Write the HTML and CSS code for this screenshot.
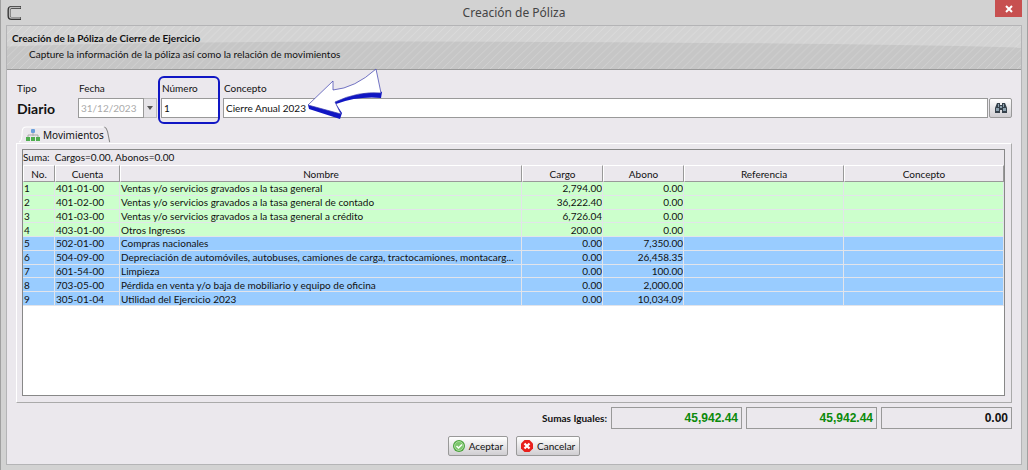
FILE: index.html
```html
<!DOCTYPE html>
<html lang="es">
<head>
<meta charset="utf-8">
<title>Creación de Póliza</title>
<link rel="stylesheet" href="styles.css">
</head>
<body>
<div class="window">
  <header class="titlebar">
    <svg class="app-icon" viewBox="0 0 16 16" aria-hidden="true"><path d="M15 2.500H5.500Q3 2.500 3 5V11Q3 13.500 5.500 13.500H15" fill="none" stroke="#333" stroke-width="3"/><path d="M14.500 2.500H5.500Q3.500 2.500 3.500 5V11Q3.500 13 5.500 13H14.500" fill="none" stroke="#bbb" stroke-width="1.300"/></svg>
    <h1 class="title">Creación de Póliza</h1>
    <button class="close" aria-label="Cerrar"><svg viewBox="0 0 8 8" aria-hidden="true"><path d="M1 1L7 7M7 1L1 7" stroke="#fff" stroke-width="2"/></svg></button>
  </header>
  <main class="content">
    <section class="banner">
      <svg class="banner-art" viewBox="0 0 1016 44" preserveAspectRatio="none" aria-hidden="true">
        <defs><pattern id="stripes" width="8" height="8" patternUnits="userSpaceOnUse"><path d="M-2 2L2 -2M0 8L8 0M6 10L10 6" stroke="#fff" stroke-opacity=".2" stroke-width="1"/></pattern></defs>
        <rect width="1016" height="44" fill="#d3d3d3"/>
        <path d="M0 21Q150 15 500 16Q800 17 1016 22V44H0Z" fill="#c6c6c6"/>
        <rect width="1016" height="44" fill="url(#stripes)"/>
      </svg>
      <h2 class="banner-title">Creación de la Póliza de Cierre de Ejercicio</h2>
      <p class="banner-text">Capture la información de la póliza así como la relación de movimientos</p>
    </section>
    <form class="body">
      <div class="fields">
        <div class="field type"><span class="label">Tipo</span><strong class="type-value">Diario</strong></div>
        <div class="field date"><label class="label" for="fecha">Fecha</label>
          <div class="combo"><input id="fecha" class="input" value="31/12/2023" disabled><button type="button" class="drop" aria-label="Abrir calendario"><svg viewBox="0 0 6 4" aria-hidden="true"><path d="M0 0H6L3 4Z" fill="#555"/></svg></button></div>
        </div>
        <div class="field number"><label class="label" for="numero">Número</label><input id="numero" class="input" value="1"><span class="highlight"></span></div>
        <div class="field concept"><label class="label" for="concepto">Concepto</label>
          <div class="search"><input id="concepto" class="input" value="Cierre Anual 2023"><button type="button" class="find" aria-label="Buscar"><svg viewBox="0 0 12 12" aria-hidden="true"><path d="M2 1H5V3H7V1H10L12 6V11H7V8H5V11H0V6Z" fill="#35414b"/><path d="M1 6H4V9H1ZM8 6H11V9H8ZM3 2H4V5H3ZM8 2H9V5H8ZM5 4H7V6H5Z" fill="#8ba0ae"/></svg></button></div>
          <svg class="arrow" viewBox="0 0 90 60" aria-hidden="true"><path d="M8 41L9 45L40 55L42 49L36 40Q58 32 81 34L82 28L76 26L34 36Z" fill="#1016c4"/><path d="M8 41L33 17L33 26Q55 24 76 5L81 29Q58 27 35 38L41 50Z" fill="#fff" stroke="#3a3cae" stroke-width=".7"/></svg>
        </div>
      </div>
      <div class="tabs"><button type="button" class="tab">
        <svg class="tab-shape" viewBox="0 0 88 18" preserveAspectRatio="none" aria-hidden="true"><path d="M0 18Q3 17 3 6Q3 1 7 1H80Q83 1 84 5L87 18Z" fill="#ebe8ed"/><path d="M0 17Q3 16 3 6Q3 1 7 1H80" fill="none" stroke="#fff"/><path d="M81 1Q83 2 84 6L86 17" fill="none" stroke="#888"/></svg>
        <svg class="tree" viewBox="0 0 14 12" aria-hidden="true"><path d="M7 4V7M2 8V6H12V8" fill="none" stroke="#aaa"/><rect x="5" y="0" width="4" height="4" rx="1" fill="#6a9fdc"/><path d="M0 8H4V12H0ZM5 8H9V12H5ZM10 8H14V12H10Z" fill="#4fae50"/></svg>
        <span>Movimientos</span></button></div>
      <section class="panel">
        <div class="sheet">
          <p class="sum">Suma:&nbsp; Cargos=0.00, Abonos=0.00</p>
          <table class="grid">
            <colgroup><col class="c-no"><col class="c-account"><col><col class="c-amount"><col class="c-amount"><col class="c-text"><col class="c-text"></colgroup>
            <thead><tr><th>No.</th><th>Cuenta</th><th>Nombre</th><th>Cargo</th><th>Abono</th><th>Referencia</th><th>Concepto</th></tr></thead>
            <tbody>
              <tr class="debit"><td>1</td><td>401-01-00</td><td>Ventas y/o servicios gravados a la tasa general</td><td class="num">2,794.00</td><td class="num">0.00</td><td></td><td></td></tr>
              <tr class="debit"><td>2</td><td>401-02-00</td><td>Ventas y/o servicios gravados a la tasa general de contado</td><td class="num">36,222.40</td><td class="num">0.00</td><td></td><td></td></tr>
              <tr class="debit"><td>3</td><td>401-03-00</td><td>Ventas y/o servicios gravados a la tasa general a crédito</td><td class="num">6,726.04</td><td class="num">0.00</td><td></td><td></td></tr>
              <tr class="debit"><td>4</td><td>403-01-00</td><td>Otros Ingresos</td><td class="num">200.00</td><td class="num">0.00</td><td></td><td></td></tr>
              <tr class="credit"><td>5</td><td>502-01-00</td><td>Compras nacionales</td><td class="num">0.00</td><td class="num">7,350.00</td><td></td><td></td></tr>
              <tr class="credit"><td>6</td><td>504-09-00</td><td>Depreciación de automóviles, autobuses, camiones de carga, tractocamiones, montacarg...</td><td class="num">0.00</td><td class="num">26,458.35</td><td></td><td></td></tr>
              <tr class="credit"><td>7</td><td>601-54-00</td><td>Limpieza</td><td class="num">0.00</td><td class="num">100.00</td><td></td><td></td></tr>
              <tr class="credit"><td>8</td><td>703-05-00</td><td>Pérdida en venta y/o baja de mobiliario y equipo de oficina</td><td class="num">0.00</td><td class="num">2,000.00</td><td></td><td></td></tr>
              <tr class="credit"><td>9</td><td>305-01-04</td><td>Utilidad del Ejercicio 2023</td><td class="num">0.00</td><td class="num">10,034.09</td><td></td><td></td></tr>
            </tbody>
          </table>
        </div>
      </section>
      <div class="totals"><span class="totals-label">Sumas Iguales:</span><output class="total equal">45,942.44</output><output class="total equal">45,942.44</output><output class="total">0.00</output></div>
      <div class="actions">
        <button type="button" class="btn"><svg viewBox="0 0 12 12" aria-hidden="true"><circle cx="6" cy="6" r="6" fill="#4aa33c"/><circle cx="6" cy="6" r="4.500" fill="#7cc66c" stroke="#c4e8bb" stroke-width=".7"/><path d="M3.500 6L5.500 8L9 4.500" fill="none" stroke="#fff" stroke-width="1.500"/></svg>Aceptar</button>
        <button type="button" class="btn"><svg viewBox="0 0 12 12" aria-hidden="true"><path d="M3.500 0H8.500L12 3.500V8.500L8.500 12H3.500L0 8.500V3.500Z" fill="#e8201c"/><path d="M3.500 3.500L8.500 8.500M8.500 3.500L3.500 8.500" stroke="#fff" stroke-width="2.200"/></svg>Cancelar</button>
      </div>
    </form>
  </main>
</div>
</body>
</html>
```
FILE: styles.css
```css
* { box-sizing: border-box; }
body { margin: 0; background: #d2d2d2; color: #111; font: 10px/12px Lato, "Open Sans", sans-serif; }
h1, h2, p { margin: 0; font-weight: normal; }
button, input { font: inherit; color: inherit; padding: 0; margin: 0; border-radius: 0; }
.window { min-height: 100vh; display: flex; flex-direction: column; padding: 0 5px 5px; border: solid #a0a0a0; border-width: 0 1px; background: #d2d2d2; }
.titlebar { height: 25px; display: grid; grid-template-columns: 40px 1fr 40px; align-items: center; }
.app-icon { width: 16px; height: 16px; }
.title { text-align: center; font: 12px/16px "Noto Sans", "Open Sans", sans-serif; color: #444; }
.close { align-self: start; justify-self: end; width: 27px; height: 17px; border: 0; background: #c75050; display: grid; place-items: center; }
.close svg { width: 8px; height: 8px; }
.content { flex: 1; display: flex; flex-direction: column; border: 1px solid #b4b4b6; background: #ebe8ed; }
.banner { position: relative; height: 44px; padding: 5px 5px; border-bottom: 1px solid #999; }
.banner-art { position: absolute; inset: 0; width: 100%; height: 100%; }
.banner-title { position: relative; font-size: 10px; font-weight: bold; line-height: 14px; }
.banner-text { position: relative; padding: 3px 17px; line-height: 12px; }
.body { flex: 1; display: flex; flex-direction: column; padding: 11px 9px 8px; }
.fields { display: flex; gap: 4px; }
.field { position: relative; display: flex; flex-direction: column; gap: 3px; }
.label { padding-left: 1px; line-height: 14px; }
.type { width: 58px; }
.type-value { padding-left: 1px; font-size: 14px; line-height: 22px; }
.date { width: 79px; }
.number { width: 58px; }
.concept { flex: 1; }
.input { width: 100%; min-width: 0; height: 20px; padding: 0 2px; border: 1px solid #999; background: #fff; }
.input:disabled { color: #aaa; }
.combo, .search { display: flex; }
.search { gap: 1px; }
.drop { flex: none; width: 13px; height: 20px; border: 1px solid #bbb; border-left: 0; background: #e6e4e8; display: grid; place-items: center; }
.drop svg { width: 6px; height: 4px; }
.find { flex: none; width: 23px; height: 20px; border: 1px solid #999; border-radius: 2px; background: linear-gradient(#fff, #d0ced2); display: grid; place-items: center; }
.find svg { width: 12px; height: 12px; }
.highlight { position: absolute; inset: -5px -1px -4px -3px; border: 2px solid #1016c4; border-radius: 6px; pointer-events: none; }
.arrow { position: absolute; left: 77px; top: -17px; width: 90px; height: 60px; pointer-events: none; }
.tabs { display: flex; margin-top: 6px; padding-left: 3px; }
.tab { position: relative; height: 17px; display: flex; align-items: center; gap: 3px; padding: 0 8px 0 7px; border: 0; background: none; }
.tab-shape { position: absolute; inset: 0; width: 100%; height: 100%; }
.tab span, .tree { position: relative; }
.tab span { font: 10px/12px "Noto Sans", "Open Sans", sans-serif; }
.tree { width: 14px; height: 12px; }
.panel { flex: 1; display: flex; border: 1px solid; border-color: #fff #aaa #aaa #fff; padding: 5px 6px 6px 5px; }
.sheet { flex: 1; border: 1px solid #888; background: #fff; }
.sum { height: 15px; line-height: 15px; background: #ebe8ed; }
.grid { width: 100%; height: 141px; table-layout: fixed; border-collapse: separate; border-spacing: 0; background: #fff; }
.c-no { width: 32px; }
.c-account { width: 65px; }
.c-amount { width: 81px; }
.c-text { width: 160px; }
th { height: 17px; padding: 0; font-weight: normal; line-height: 12px; background: #ebe8ed; border: 1px solid; border-color: #fff #999 #999 #fff; }
td { padding: 0 0 0 1px; line-height: 12px; white-space: nowrap; overflow: hidden; text-overflow: ellipsis; border: solid #e2e4ea; border-width: 0 1px 1px 0; }
.num { text-align: right; }
.debit { background: #cfc; }
.credit { background: #9cf; }
.totals { display: flex; justify-content: flex-end; align-items: center; gap: 4px; margin-top: 4px; }
.totals-label { font-weight: bold; }
.total { width: 131px; height: 22px; padding-right: 3px; border: 1px solid #999; text-align: right; font: bold 12px/20px "Liberation Sans", Arial, sans-serif; }
.equal { color: #0b8a0b; }
.actions { display: flex; justify-content: center; gap: 8px; margin-top: 7px; }
.btn { height: 20px; display: flex; align-items: center; gap: 4px; padding: 0 4px; border: 1px solid #999; border-radius: 2px; background: linear-gradient(#fff, #d0ced2); }
.btn svg { width: 12px; height: 12px; }
```
